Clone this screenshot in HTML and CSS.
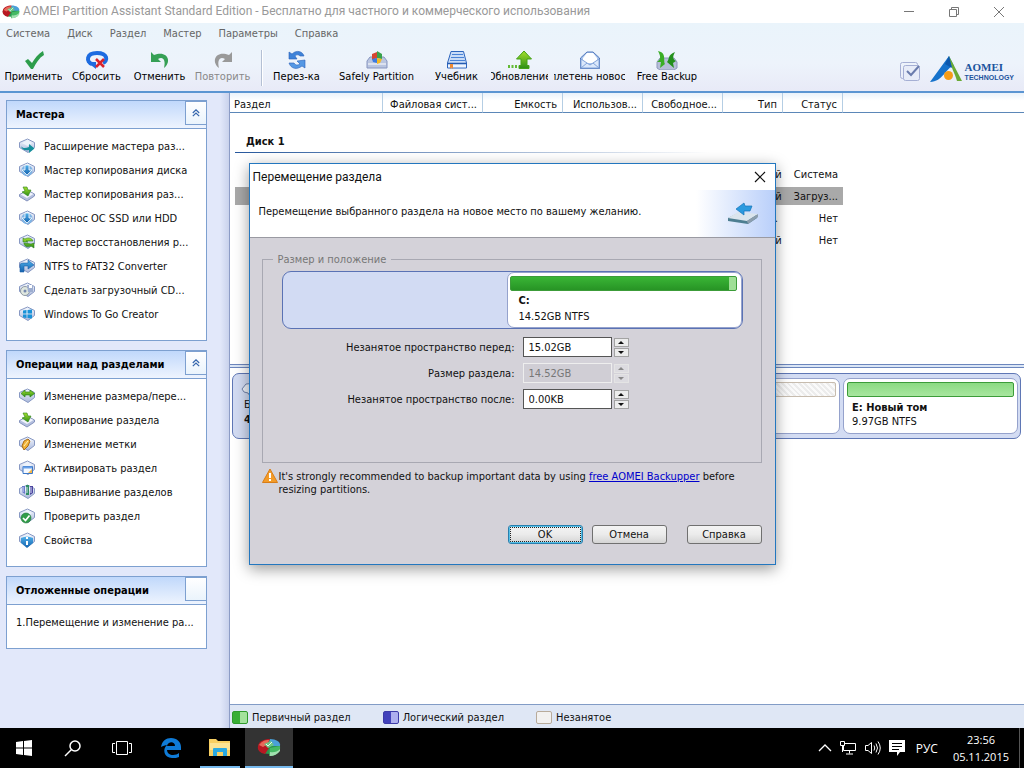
FILE: index.html
```html
<!DOCTYPE html>
<html lang="ru">
<head>
    <meta charset="utf-8">
    <title>AOMEI Partition Assistant Standard Edition</title>
    <link rel="stylesheet" href="styles.css">
</head>
<body>
    <!-- Shared icon shapes -->
    <svg class="defs" width="0" height="0" aria-hidden="true">
        <defs>
            <linearGradient id="gDisk" x1="0" y1="0" x2="0" y2="1">
                <stop offset="0" stop-color="#f4f7fd"/><stop offset="1" stop-color="#a9b8dc"/>
            </linearGradient>
            <linearGradient id="gBlue" x1="0" y1="0" x2="0" y2="1">
                <stop offset="0" stop-color="#4fb0ea"/><stop offset="1" stop-color="#1462ae"/>
            </linearGradient>
            <linearGradient id="gGreen" x1="0" y1="0" x2="0" y2="1">
                <stop offset="0" stop-color="#a5e02e"/><stop offset="1" stop-color="#2c8d17"/>
            </linearGradient>
            <symbol id="disk" viewBox="0 0 16 16">
                <path d="M.5 4.500 8.500 1 15.500 4.500V9.500L9 14.500.5 9.500Z" fill="url(#gDisk)" stroke="#8798c3"/>
                <path d="M3 5 8.500 2.800 13 5 8.500 8Z" fill="#eef3fb"/>
            </symbol>
            <symbol id="flat" viewBox="0 0 16 16">
                <path d="M.5 8.500 9 4.500 15.500 8V10L8 15 .5 10.500Z" fill="#b4bfdf" stroke="#8493bd"/>
                <path d="M1.500 8.500 9 5.200 14.500 8 8 12Z" fill="#f1f4fc"/>
            </symbol>
            <symbol id="pie" viewBox="0 0 24 20">
                <ellipse cx="12" cy="10" rx="11" ry="7" fill="#2a9650"/>
                <path d="M1 9C2 4 7 2 13 2l-2 6 1 3-4 6C3 16 0 13 1 9Z" fill="#b81822"/>
                <path d="M2 8C5 4 8 3 12 3L11 7 6 10Z" fill="#e8685a"/>
                <path d="M13 2c6 0 11 3 10 7L14 9 12 6Z" fill="#4aa0d8"/>
                <path d="M23 9c1 6-4 10-11 10l1-8Z" fill="#45b963"/>
                <path d="M13 15Q19 16 23 12V14Q19 19 13 19Z" fill="#a2e0b0"/>
                <path d="M7 7 14 4l3 4-6 3Z" fill="#6cc684"/>
                <path d="M9 7 11 9 15 5" fill="none" stroke="#e9f7ea"/>
            </symbol>
            <symbol id="arrowDown" viewBox="0 0 16 16">
                <circle cx="8" cy="8.500" r="5.500" fill="#7fb4e4"/>
                <path d="M6 3h4v5h3L8 13 3 8h3Z" fill="url(#gBlue)" stroke="#fff" stroke-width=".8"/>
            </symbol>
        </defs>
    </svg>

    <div class="app">
        <header class="titlebar">
            <svg class="app-icon" width="18" height="15"><use href="#pie"/></svg>
            <span class="title">AOMEI Partition Assistant Standard Edition - Бесплатно для частного и коммерческого использования</span>
            <div class="window-controls">
                <button aria-label="Свернуть"><svg width="12" height="12"><path d="M1 5.500h10" stroke="#777"/></svg></button>
                <button aria-label="Восстановить"><svg width="12" height="12" fill="none" stroke="#777"><path d="M1.500 3.500h7v7h-7zM3.500 3.500v-2h7v7h-2"/></svg></button>
                <button aria-label="Закрыть"><svg width="12" height="12"><path d="M1 1 11 11M11 1 1 11" stroke="#777"/></svg></button>
            </div>
        </header>

        <div class="top">
            <nav class="menu">
                <a href="#">Система</a>
                <a href="#">Диск</a>
                <a href="#">Раздел</a>
                <a href="#">Мастер</a>
                <a href="#">Параметры</a>
                <a href="#">Справка</a>
            </nav>
            <div class="toolbar">
                <button class="tool">
                    <svg width="24" height="20" viewBox="0 0 24 20"><path d="M3 11 6 9 10 13C13 8 16 4 21 1L22 5C17 8 14 13 11 19H9Z" fill="#2d9d4b"/></svg>
                    <span>Применить</span>
                </button>
                <button class="tool">
                    <svg width="26" height="20" viewBox="0 0 26 20"><path d="M8 14C2 12 2 3 13 3s11 8 6 10" fill="none" stroke="#1d6be0" stroke-width="4"/><path d="M3 12h9v7Z" fill="#1d6be0"/><path d="M12 9 20 17M20 9 12 17" stroke="#d8222c" stroke-width="2.500"/></svg>
                    <span>Сбросить</span>
                </button>
                <button class="tool">
                    <svg width="24" height="20" viewBox="0 0 24 20"><path d="M3 2V12H13L10 9C15 6 18 10 16 18 24 12 20 0 6 5Z" fill="#36a055"/></svg>
                    <span>Отменить</span>
                </button>
                <button class="tool" disabled>
                    <svg width="24" height="20" viewBox="0 0 24 20"><path d="M21 2V12H11L14 9C9 6 6 10 8 18 0 12 4 0 18 5Z" fill="#999"/></svg>
                    <span>Повторить</span>
                </button>
                <div class="separator"></div>
                <button class="tool">
                    <svg width="22" height="20" viewBox="0 0 22 20"><path d="M3 9V2l3 2C11-1 17 2 18 6H14C12 4 10 5 9 6l2 3Z" fill="#3f83d8" stroke="#2860b8" stroke-width=".6"/><path d="M19 10v8l-3-2C11 20 5 19 3 13H8c2 3 4 2 6 1l-3-3Z" fill="#5598e4" stroke="#2860b8" stroke-width=".6"/></svg>
                    <span>Перез-ка</span>
                </button>
                <button class="tool tool-wide">
                    <svg width="24" height="20" viewBox="0 0 24 20"><path d="M2 11 5 7H19l3 4v7H2Z" fill="#b9c5e0" stroke="#8795bf"/><path d="M3 14H21" stroke="#fff"/><path d="M7 4 12 2V8L7 10Z" fill="#d64531"/><path d="M12 1 17 4V9L12 8Z" fill="#38a24b"/><path d="M7 9 12 8V13L8 12Z" fill="#3c7be0"/><path d="M12 8 17 9 15 13 12 14Z" fill="#f5ba25"/></svg>
                    <span>Safely Partition</span>
                </button>
                <button class="tool">
                    <svg width="22" height="20" viewBox="0 0 22 20"><path d="M5 1.500H17.500L20.500 13V18H1.500V13Z" fill="#c9dcf7" stroke="#2d65bd"/><path d="M6 4.500H17M5 7.500H18M4 10.500H19" stroke="#4a83d6"/><path d="M1.500 13.500H20.500" stroke="#245cb2" stroke-width="1.500"/><path d="M2 16H20" stroke="#eef4fd" stroke-width="2.500"/><path d="M4 14h3v5l-1.500-1.500L4 19Z" fill="#ee8a34"/></svg>
                    <span>Учебник</span>
                </button>
                <button class="tool">
                    <svg width="26" height="20" viewBox="0 0 26 20"><path d="M17 1 24.500 9H20V15.500H22V18.500H12V15.500H14V9H9.500Z" fill="url(#gGreen)" stroke="#45a317"/><path d="M1 15h2v3H1zM4.500 15h2v3h-2zM8 15h2v3H8z" fill="#63ba36"/></svg>
                    <span>Обновление</span>
                </button>
                <button class="tool tool-news">
                    <svg width="22" height="20" viewBox="0 0 22 20"><path d="M1.500 8 8 2H14L20.500 8V18.500H1.500Z" fill="#a9c4ed" stroke="#5278bb"/><path d="M4 8 8 3H14L18 8V13H4Z" fill="#fff"/><path d="M2 9 11 15 20 9V18H2Z" fill="#dbe8fb" stroke="#83a4d9"/><path d="M2 18 8 13M20 18 14 13" stroke="#83a4d9"/></svg>
                    <span>Бюллетень новостей</span>
                </button>
                <button class="tool tool-backup">
                    <svg width="26" height="20" viewBox="0 0 26 20"><path d="M3 12 6 8H20L23 12V18L20 20H6L3 18Z" fill="#b6bed8" stroke="#8e98bb"/><path d="M4 1C13 3 9 10 11 14L6 18 7 12 3 12C8 9 6 5 4 1Z" fill="#3aae25"/><path d="M21 2C13 5 16 9 13 12L20 18 19 13 22 11C18 9 19 6 21 2Z" fill="#23901c"/></svg>
                    <span>Free Backup</span>
                </button>
                <div class="brand">
                    <svg width="22" height="22" viewBox="0 0 22 22" fill="none" stroke="#a5afd4"><rect x="1.500" y="1.500" width="17" height="16" rx="2"/><rect x="4.500" y="4.500" width="16" height="15" rx="2" fill="#e7ecf8"/><path d="M8 10 12 14 20 5" stroke="#6a7cad" stroke-width="2"/></svg>
                    <svg width="34" height="28" viewBox="0 0 34 28"><path d="M20 1 25 11C17 12 14 27 1 27Z" fill="#1672cb"/><path d="M20 1 33 26H28C26 18 22 14 20 1Z" fill="#6aaa35"/><path d="M20 1 23 13 16 9Z" fill="#0d58ad"/><circle cx="19.500" cy="20.500" r="4.500" fill="#f59c17"/></svg>
                    <div class="brand-name"><b>AOMEI</b>TECHNOLOGY</div>
                </div>
            </div>
        </div>

        <div class="workspace">
            <aside class="sidebar">
                <section class="panel">
                    <div class="panel-head">
                        <h2>Мастера</h2>
                        <button class="collapse" aria-label="Свернуть"><svg width="8" height="8" viewBox="0 0 10 10" fill="none" stroke="#3566ad" stroke-width="1.500"><path d="M1 5 5 1 9 5M1 9 5 5 9 9"/></svg></button>
                    </div>
                    <ul>
                        <li><svg width="16" height="16"><use href="#disk"/><path d="M2 8C4 11 7 10 10 9V6L15.500 10.500 10 15V12C6 13 3 12 2 8Z" fill="#168f9c"/></svg><a href="#">Расширение мастера раз...</a></li>
                        <li><svg width="16" height="16"><use href="#disk"/><use href="#arrowDown"/></svg><a href="#">Мастер копирования диска</a></li>
                        <li><svg width="16" height="16"><use href="#flat"/><path d="M4 1 8 1 9 4 12 4 9 10 3 6 6 5Z" fill="url(#gGreen)" stroke="#28801b" stroke-width=".6"/></svg><a href="#">Мастер копирования раз...</a></li>
                        <li><svg width="16" height="16"><use href="#disk"/><use href="#arrowDown"/></svg><a href="#">Перенос ОС SSD или HDD</a></li>
                        <li><svg width="16" height="16"><use href="#disk"/><path d="M4 8V4L6 5C9 3 13 4 14 7H11L7 7 9 8ZM15 9V14L12 12C8 14 5 12 5 9L12 10Z" fill="url(#gGreen)" stroke="#287e24" stroke-width=".6"/></svg><a href="#">Мастер восстановления р...</a></li>
                        <li><svg width="16" height="16"><use href="#disk"/><path d="M1 14V7Q1 5 4 5H9V2L15 7 9 11V8H5V14Z" fill="url(#gBlue)" stroke="#1b5ea8" stroke-width=".6"/></svg><a href="#">NTFS to FAT32 Converter</a></li>
                        <li><svg width="16" height="16"><use href="#disk"/><circle cx="6" cy="9" r="4.500" fill="#dfe7df" stroke="#8f9aa4"/><circle cx="6" cy="9" r="1.500" fill="#7689ad"/><path d="M8 3h6v7H9Z" fill="#9dadcf"/><path d="M10 3h3v3h-3z" fill="#fff"/></svg><a href="#">Сделать загрузочный CD...</a></li>
                        <li><svg width="16" height="16"><use href="#disk"/><path d="M4 4.500 7.500 4V7.500H4ZM8.500 4 13 3.500V7.500H8.500ZM4 8.500H7.500V12L4 11.500ZM8.500 8.500H13V12.500L8.500 12Z" fill="#1792d8"/></svg><a href="#">Windows To Go Creator</a></li>
                    </ul>
                </section>

                <section class="panel">
                    <div class="panel-head">
                        <h2>Операции над разделами</h2>
                        <button class="collapse" aria-label="Свернуть"><svg width="8" height="8" viewBox="0 0 10 10" fill="none" stroke="#3566ad" stroke-width="1.500"><path d="M1 5 5 1 9 5M1 9 5 5 9 9"/></svg></button>
                    </div>
                    <ul>
                        <li><svg width="16" height="16"><use href="#disk"/><path d="M2 5.500 6 2V4H11V2L15.500 5.500 11 9V7H6V9Z" fill="url(#gGreen)" stroke="#2d8518" stroke-width=".7"/></svg><a href="#">Изменение размера/пере...</a></li>
                        <li><svg width="16" height="16"><use href="#flat"/><path d="M4 1 8 1 9 4 12 4 9 10 3 6 6 5Z" fill="url(#gGreen)" stroke="#28801b" stroke-width=".6"/></svg><a href="#">Копирование раздела</a></li>
                        <li><svg width="16" height="16"><use href="#disk"/><path d="M3 10 5 5 9 3 11 5 9 10 5 14Z" fill="#f1b33a" stroke="#a66a18"/><path d="M5 10 9 5" stroke="#fff0b8"/></svg><a href="#">Изменение метки</a></li>
                        <li><svg width="16" height="16"><use href="#disk"/><path d="M4 6.500H13.500V13.500H4Z" fill="#f5f9ff" stroke="#3d79c8"/><path d="M4 7.500h9" stroke="#68a0e8" stroke-width="2"/><path d="M9 13 13 9V13Z" fill="#f4b548"/></svg><a href="#">Активировать раздел</a></li>
                        <li><svg width="16" height="16"><use href="#disk"/><path d="M3 2h3v8L3 8Z" fill="#6978c8"/><path d="M7 1h3v10H7Z" fill="#2f8d62"/><path d="M11 2h3v7l-3 2Z" fill="#4c459e"/><path d="M4 3v5M8 3v6M12 3v6" stroke="#d9e0fa"/></svg><a href="#">Выравнивание разделов</a></li>
                        <li><svg width="16" height="16"><use href="#disk"/><circle cx="7" cy="10" r="5" fill="#329d48" stroke="#1b733a" stroke-width=".6"/><path d="M4 10 6.500 12.500 10.500 7.500" fill="none" stroke="#fff" stroke-width="1.700"/></svg><a href="#">Проверить раздел</a></li>
                        <li><svg width="16" height="16"><use href="#disk"/><path d="M2 6Q8 3 14 6V11L8 16 2 11Z" fill="url(#gBlue)"/><path d="M8 9v4M8 5v2" stroke="#fff" stroke-width="2"/></svg><a href="#">Свойства</a></li>
                    </ul>
                </section>

                <section class="panel">
                    <div class="panel-head">
                        <h2>Отложенные операции</h2>
                        <span class="collapse"></span>
                    </div>
                    <ul class="pending">
                        <li>1.Перемещение и изменение ра...</li>
                    </ul>
                </section>
            </aside>

            <main class="main">
                <div class="partition-list">
                    <table>
                        <colgroup>
                            <col class="col-name"><col class="col-fs"><col class="col-size"><col class="col-size"><col class="col-size"><col class="col-type"><col class="col-type"><col>
                        </colgroup>
                        <thead>
                            <tr><th>Раздел</th><th>Файловая сист...</th><th>Емкость</th><th>Использов...</th><th>Свободное...</th><th>Тип</th><th>Статус</th><th></th></tr>
                        </thead>
                        <tbody>
                            <tr class="disk-row"><td colspan="8"><div>Диск 1</div></td></tr>
                            <tr><td colspan="5"></td><td>Первичный</td><td>Система</td><td></td></tr>
                            <tr class="selected"><td colspan="5"></td><td>Первичный</td><td>Загруз...</td><td></td></tr>
                            <tr><td colspan="5"></td><td>Логичес...</td><td>Нет</td><td></td></tr>
                            <tr><td colspan="5"></td><td>Первичный</td><td>Нет</td><td></td></tr>
                        </tbody>
                    </table>
                </div>
                <div class="splitter"></div>
                <div class="disk-map">
                    <div class="disk-strip">
                        <div class="disk-info">
                            <svg width="18" height="15" viewBox="0 0 18 15"><path d="M1 7 5 2 17 1 14 12 9 14 7 11 3 10Z" fill="#edf2fb" stroke="#7384ab"/></svg>
                            <div>Базовый</div>
                            <b>40.00GB</b>
                        </div>
                        <div class="part part-free"><div class="usage usage-free"></div></div>
                        <div class="part part-e">
                            <div class="usage usage-light"></div>
                            <b>E: Новый том</b>
                            <span>9.97GB NTFS</span>
                        </div>
                    </div>
                </div>
                <footer class="legend">
                    <span><i class="swatch swatch-primary"></i>Первичный раздел</span>
                    <span><i class="swatch swatch-logical"></i>Логический раздел</span>
                    <span><i class="swatch"></i>Незанятое</span>
                </footer>
            </main>
        </div>

        <div class="overlay">
            <form class="dialog" role="dialog" aria-labelledby="dialogTitle">
                <div class="dialog-title">
                    <span id="dialogTitle">Перемещение раздела</span>
                    <button type="button" aria-label="Закрыть"><svg width="12" height="12"><path d="M1 1 11 11M11 1 1 11" stroke="#111" stroke-width="1.200"/></svg></button>
                </div>
                <div class="dialog-head">
                    <p>Перемещение выбранного раздела на новое место по вашему желанию.</p>
                    <svg width="32" height="24" viewBox="0 0 32 24"><path d="M1 16 11 11 31 13 30 16 21 22 1 19Z" fill="#4d7e91"/><path d="M1 16 11 10 31 12 20 19Z" fill="#dbe5ed"/><path d="M20 19 31 12V15L21 22Z" fill="#8c9eae"/><path d="M9 7 17 1 18 4 25 4 23 9 17 9 17 13Z" fill="#2b9adf" stroke="#1673b8" stroke-width=".7"/></svg>
                </div>
                <div class="dialog-body">
                    <fieldset>
                        <legend>Размер и положение</legend>
                        <div class="size-bar">
                            <div class="part part-c">
                                <div class="usage usage-full"></div>
                                <b>C:</b>
                                <span>14.52GB NTFS</span>
                            </div>
                        </div>
                        <div class="field">
                            <label for="before">Незанятое пространство перед:</label>
                            <input id="before" type="text" value="15.02GB">
                            <div class="spin"><button type="button" aria-label="Больше"></button><button type="button" aria-label="Меньше"></button></div>
                        </div>
                        <div class="field">
                            <label for="size">Размер раздела:</label>
                            <input id="size" type="text" value="14.52GB" disabled>
                            <div class="spin"><button type="button" aria-label="Больше" disabled></button><button type="button" aria-label="Меньше" disabled></button></div>
                        </div>
                        <div class="field">
                            <label for="after">Незанятое пространство после:</label>
                            <input id="after" type="text" value="0.00KB">
                            <div class="spin"><button type="button" aria-label="Больше"></button><button type="button" aria-label="Меньше"></button></div>
                        </div>
                    </fieldset>
                    <div class="warning">
                        <svg width="16" height="16" viewBox="0 0 16 16"><path d="M8 1 15.500 14.500H.5Z" fill="#f39b28" stroke="#d87d17" stroke-linejoin="round"/><path d="M8 5v5M8 11v2" stroke="#fff" stroke-width="2"/></svg>
                        <p>It's strongly recommended to backup important data by using <a href="#">free AOMEI Backupper</a> before<br>resizing partitions.</p>
                    </div>
                    <div class="actions">
                        <button type="button" class="btn btn-default">OK</button>
                        <button type="button" class="btn">Отмена</button>
                        <button type="button" class="btn btn-help">Справка</button>
                    </div>
                </div>
            </form>
        </div>
    </div>

    <footer class="taskbar">
        <button class="task" aria-label="Пуск"><svg width="16" height="16" fill="#fff"><path d="M0 2 7 1V7.500H0ZM8 1 16 0V7.500H8ZM0 8.500H7V15L0 14ZM8 8.500H16V16L8 15Z"/></svg></button>
        <button class="task" aria-label="Поиск"><svg width="18" height="18" fill="none" stroke="#fff" stroke-width="1.500"><circle cx="11" cy="7" r="5"/><path d="M7.500 10.500 1 17"/></svg></button>
        <button class="task" aria-label="Представление задач"><svg width="20" height="16" fill="none" stroke="#fff"><path d="M4.500 1.500h11v13h-11zM3 3.500H.5v9H3M17 3.500h2.500v9H17"/></svg></button>
        <button class="task" aria-label="Edge"><svg width="20" height="20" viewBox="0 0 20 20"><path d="M0 9C1 3 5 0 10 0c6 0 10 4 10 9v3H6c0 3 3 5 6 5 2 0 5-1 6-2v4c-2 1-4 1-7 1-8 0-10-9-5-13-2 0-4 1-6 2ZM6 8h8c0-5-7-5-8 0Z" fill="#0f7bd7" fill-rule="evenodd"/></svg></button>
        <button class="task task-open" aria-label="Проводник"><svg width="22" height="20" viewBox="0 0 22 20"><path d="M0 2H7L9 4H21V19H0Z" fill="#f7cf62"/><path d="M1 6H21V13H1Z" fill="#fbe393"/><path d="M4 19V12Q4 11 5 11H17Q18 11 18 12V19H14V15H8V19Z" fill="#29a9e1"/></svg></button>
        <button class="task task-active" aria-label="AOMEI"><svg width="24" height="20"><use href="#pie"/></svg></button>
        <div class="tray">
            <svg width="14" height="10" fill="none" stroke="#fff" stroke-width="1.300"><path d="M1 8 7 2 13 8"/></svg>
            <svg width="18" height="16" fill="none" stroke="#fff"><path d="M1.500 1.500h4v4h-4zM6 3.500H16.500V10.500H4.500V6M10.500 11V13.500M7 14h7M3.500 6v6"/></svg>
            <svg width="18" height="16" fill="none" stroke="#fff"><path d="M1.500 5.500H4L7.500 2.500V13.500L4 10.500H1.500ZM10 5.500Q11.500 8 10 10.500M12 3.500Q15 8 12 12.500M14 1.500Q18.500 8 14 14.500"/></svg>
            <svg width="16" height="16"><path d="M0 0H16V12H11L8 16V12H0Z" fill="#fff"/><path d="M3 3.500H13M3 6.500H13M3 9.500H10" stroke="#000"/></svg>
            <span class="lang">РУС</span>
            <div class="clock">23:56<br>05.11.2015</div>
        </div>
    </footer>
</body>
</html>
```
FILE: styles.css
```css
* {
    box-sizing: border-box;
}

body {
    margin: 0;
    height: 100vh;
    display: flex;
    flex-direction: column;
    overflow: hidden;
    font-family: "DejaVu Sans Condensed", Tahoma, sans-serif;
    font-size: 11px;
    line-height: 13px;
    color: #111;
}

button, input {
    font: inherit;
    color: inherit;
}

button {
    padding: 0;
    border: 0;
    background: none;
}

svg {
    display: block;
    flex-shrink: 0;
}

.defs {
    position: absolute;
}

.app {
    flex: 1;
    min-height: 0;
    display: flex;
    flex-direction: column;
    position: relative;
}

/* Title bar */
.titlebar {
    display: flex;
    align-items: center;
    height: 23px;
    padding: 0 3px 0 2px;
    background: #fff;
    color: #999;
    font-family: Roboto, "Segoe UI", sans-serif;
    font-size: 12px;
}

.title {
    margin-left: 3px;
    white-space: nowrap;
}

.window-controls {
    display: flex;
    margin-left: auto;
}

.window-controls button {
    width: 45px;
    display: flex;
    justify-content: center;
}

/* Menu and toolbar */
.top {
    background: linear-gradient(#eaf4fb, #edf3fb 60%, #e8eaf7);
    border-bottom: 2px solid #5b95d2;
}

.menu {
    display: flex;
    gap: 17px;
    height: 22px;
    padding: 4px 6px;
}

.menu a {
    color: #666;
    text-decoration: none;
}

.toolbar {
    display: flex;
    align-items: flex-start;
    height: 46px;
    padding: 5px 10px 0 2px;
}

.tool {
    display: flex;
    flex-direction: column;
    align-items: center;
    width: 63px;
    padding: 0 3px;
}

.tool span {
    display: flex;
    justify-content: center;
    width: 100%;
    overflow: hidden;
    white-space: nowrap;
    color: #000;
}

.tool:disabled span {
    color: #888;
}

.tool-wide {
    width: 97px;
}

.tool-news {
    width: 77px;
}

.tool-backup {
    width: 78px;
}

.separator {
    width: 2px;
    height: 36px;
    margin: 0 2px 0 7px;
    border-left: 1px solid #b4c0d4;
    border-right: 1px solid #fff;
}

.brand {
    display: flex;
    align-items: flex-end;
    gap: 8px;
    margin-left: auto;
    height: 33px;
}

.brand-name {
    margin-left: -6px;
    padding-bottom: 1px;
    font-family: "Liberation Sans", Arial, sans-serif;
    font-size: 7px;
    font-weight: bold;
    line-height: 9px;
    color: #1b549d;
}

.brand-name b {
    display: block;
    font-family: "Liberation Serif", serif;
    font-size: 11px;
    line-height: 11px;
}

/* Sidebar */
.workspace {
    flex: 1;
    min-height: 0;
    display: flex;
}

.sidebar {
    display: flex;
    flex-direction: column;
    gap: 9px;
    flex: 0 0 230px;
    padding: 7px 22px 0 6px;
    background: linear-gradient(90deg, #e2e8fa 220px, #c9d2ec);
    border-right: 1px solid #8c9cc6;
}

.panel {
    background: #fff;
    border: 1px solid #7da0d0;
}

.panel-head {
    display: flex;
    align-items: flex-end;
    height: 28px;
    border-bottom: 1px solid #7da0d0;
    background: linear-gradient(#c0d8fb, #eef4fe);
}

.panel h2 {
    flex: 1;
    margin: 0;
    padding: 0 0 7px 9px;
    font-size: 11px;
    white-space: nowrap;
    color: #000;
}

.collapse {
    display: flex;
    align-items: center;
    justify-content: center;
    align-self: flex-start;
    width: 21px;
    height: 24px;
    background: linear-gradient(#fff, #eaf4fc);
    border: 1px solid #7da0d0;
    border-width: 1px 0 1px 1px;
}

.panel ul {
    list-style: none;
    margin: 0;
    padding: 5px 0 14px 12px;
}

.panel li {
    display: flex;
    align-items: center;
    gap: 9px;
    height: 24px;
    white-space: nowrap;
}

.panel a {
    color: inherit;
    text-decoration: none;
}

.panel .pending {
    padding-left: 9px;
}

/* Partition table */
.main {
    flex: 1;
    min-width: 0;
    display: flex;
    flex-direction: column;
    background: #fff;
}

.partition-list {
    flex: 9;
    min-height: 0;
    overflow: hidden;
}

table {
    width: 100%;
    table-layout: fixed;
    border-collapse: separate;
    border-spacing: 0;
}

.col-name {
    width: 153px;
}

.col-fs {
    width: 100px;
}

.col-size {
    width: 80px;
}

.col-type {
    width: 60px;
}

th {
    height: 20px;
    padding: 3px 5px 0 0;
    font-weight: normal;
    text-align: right;
    white-space: nowrap;
    border-right: 1px solid #b5cee4;
    border-bottom: 1px solid #5b87b8;
    background: linear-gradient(#e9f2fb, #fff 40%);
}

th:first-child {
    text-align: left;
    padding-left: 4px;
}

th:last-child {
    border-right: 0;
}

td {
    height: 22px;
    padding: 0 5px 0 0;
    text-align: right;
    white-space: nowrap;
}

.selected td:not(:last-child) {
    background: #a9a9a9;
    border: solid #fff;
    border-width: 2px 0;
}

.selected td:first-child {
    border-left-width: 5px;
}

.disk-row td {
    height: 50px;
    padding: 13px 0 0 5px;
    vertical-align: top;
    text-align: left;
}

.disk-row div {
    padding: 9px 11px 4px;
    font-weight: bold;
    border-bottom: 1px solid;
    border-image: linear-gradient(90deg, #26579c, #fff 60%) 1;
}

.splitter {
    height: 4px;
    background: #dbe6f6;
    border: solid #6c86bd;
    border-width: 1px 0;
}

/* Disk map */
.disk-map {
    flex: 11;
    padding: 5px 3px 0 2px;
}

.disk-strip {
    display: flex;
    gap: 3px;
    height: 66px;
    padding: 4px 2px;
    border: 1px solid #5f77b5;
    border-radius: 7px;
    background: #d3dcf3;
}

.disk-info {
    width: 78px;
    padding: 4px 9px;
    line-height: 15px;
}

.disk-info svg {
    margin-left: -3px;
}

.part {
    display: flex;
    flex-direction: column;
    padding: 3px;
    background: #fff;
    border: 1px solid #95a2cc;
    border-radius: 7px;
}

.part b, .part span {
    padding-left: 5px;
    line-height: 14px;
}

.part-free {
    flex: 1;
}

.part-e {
    width: 175px;
}

.usage {
    flex-shrink: 0;
    height: 15px;
    margin-bottom: 4px;
    border: 1px solid #3c9c39;
    border-radius: 2px;
}

.usage-light {
    background: linear-gradient(#8bda82, #a8e69f);
}

.usage-free {
    border-color: #c7bcae;
    background: repeating-linear-gradient(45deg, #fafafa 0 2px, #ececec 2px 4px);
}

.usage-full {
    background: linear-gradient(#3ab536, #279425) no-repeat 0 0 / 97% 100%, #9fdf96;
}

/* Legend */
.legend {
    display: flex;
    align-items: center;
    gap: 32px;
    height: 24px;
    padding: 4px 2px 2px;
    background: #dfe7f5;
    border-top: 1px solid #829cc6;
}

.legend span {
    display: flex;
    align-items: center;
    gap: 4px;
}

.swatch {
    width: 16px;
    height: 13px;
    border: 1px solid #b8ab9b;
    border-radius: 2px;
    background: #f2f1f0;
}

.swatch-primary {
    border-color: #2e9a2b;
    background: linear-gradient(90deg, #39ae35 50%, #a3e29c 50%);
}

.swatch-logical {
    border-color: #3c3ba8;
    background: linear-gradient(90deg, #4242bb 50%, #adafee 50%);
}

/* Dialog */
.overlay {
    position: absolute;
    inset: 0;
    display: flex;
    align-items: center;
    justify-content: center;
}

.dialog {
    width: 527px;
    background: #d4d2d9;
    border: 1px solid #2377bf;
    box-shadow: 0 4px 14px rgba(0, 0, 0, 0.4);
}

.dialog-title {
    display: flex;
    align-items: center;
    justify-content: space-between;
    height: 26px;
    padding: 0 9px 0 3px;
    background: #fff;
    font-family: Roboto, "Segoe UI", sans-serif;
    font-size: 12px;
}

.dialog-head {
    display: flex;
    align-items: center;
    justify-content: space-between;
    height: 48px;
    padding: 0 16px 0 9px;
    background: linear-gradient(90deg, #fff 85%, #b9cffa);
    border-bottom: 1px solid #9a9aa2;
}

.dialog-head p {
    margin: 0 0 4px;
}

.dialog-body {
    padding: 15px 13px 20px 12px;
}

fieldset {
    margin: 0;
    padding: 5px 18px 47px 19px;
    border: 1px solid #a8a8b2;
}

legend {
    margin-left: -9px;
    padding: 0 5px;
    color: #777;
}

.size-bar {
    display: flex;
    justify-content: flex-end;
    height: 58px;
    margin-bottom: 8px;
    background: #d2dbf3;
    border: 1px solid #5a72b4;
    border-radius: 9px;
}

.part-c {
    width: 51%;
    padding: 3px 4px 3px 2px;
}

.part-c b, .part-c span {
    padding-left: 8px;
    line-height: 16px;
}

.part-c .usage {
    margin-bottom: 2px;
}

.field {
    display: flex;
    align-items: center;
    gap: 2px;
    margin-bottom: 6px;
}

.field label {
    width: 233px;
    margin-right: 6px;
    text-align: right;
}

.field input {
    width: 89px;
    height: 20px;
    padding: 0 5px;
    border: 1px solid #555;
    background: #fff;
}

.field input:disabled {
    color: #777;
    background: #d0ced5;
    border-color: #eee;
}

.spin {
    display: flex;
    flex-direction: column;
    gap: 1px;
}

.spin button {
    display: flex;
    align-items: center;
    justify-content: center;
    width: 15px;
    height: 9px;
    background: #ececec;
    border: 1px solid #a3a3a3;
}

.spin button::before {
    content: "";
    border: 3px solid transparent;
    border-top-width: 0;
    border-bottom-color: #111;
}

.spin button:last-child::before {
    border-width: 3px 3px 0;
    border-top-color: #111;
}

.spin button:disabled {
    border-color: #e4e4e4;
    background: #dcdbe0;
}

.spin button:disabled::before {
    border-bottom-color: #888;
    border-top-color: #888;
}

.warning {
    display: flex;
    gap: 1px;
    margin-top: 5px;
}

.warning p {
    margin: 2px 0 0;
}

.warning a {
    color: #00c;
}

.actions {
    display: flex;
    justify-content: flex-end;
    gap: 9px;
    margin-top: 29px;
}

.btn {
    width: 75px;
    height: 19px;
    border: 1px solid #707070;
    border-radius: 3px;
    background: linear-gradient(#f4f4f4, #ebebeb 50%, #d4d4d4);
}

.btn-default {
    border-color: #287fae;
    box-shadow: inset 0 0 0 1px #55c0e8;
    outline: 1px dotted #222;
    outline-offset: -3px;
}

.btn-help {
    margin-left: 11px;
}

/* Taskbar */
.taskbar {
    display: flex;
    gap: 1px;
    height: 40px;
    background: #000;
    color: #fff;
    font-family: "Open Sans", "Segoe UI", sans-serif;
    font-size: 12px;
}

.task {
    display: flex;
    align-items: center;
    justify-content: center;
    width: 48px;
}

.task-open {
    width: 40px;
    margin: 0 4px;
    border-bottom: 2px solid #76b9ed;
}

.task-active {
    background: #333;
    border-bottom: 2px solid #76b9ed;
}

.tray {
    display: flex;
    align-items: center;
    gap: 7px;
    margin: 0 4px 0 auto;
    padding-right: 10px;
    border-right: 1px solid #555;
}

.lang {
    margin: 0 8px 0 4px;
}

.clock {
    font-size: 11px;
    line-height: 17px;
    text-align: center;
}
```
